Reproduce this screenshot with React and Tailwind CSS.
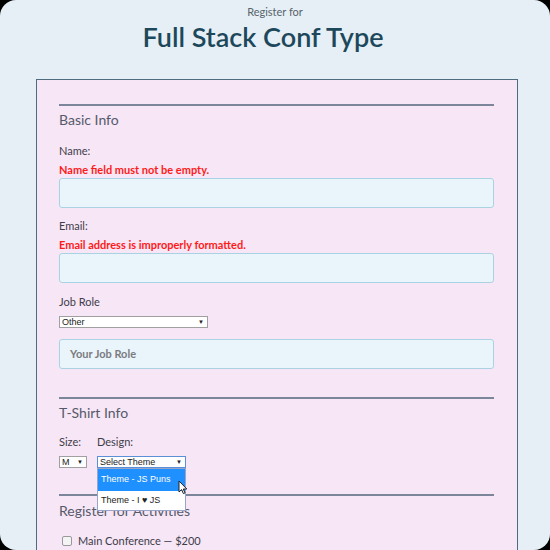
import React from 'react';

const font = { fontFamily: 'Lato, "Open Sans", sans-serif' };

const Rule = ({ className = '' }) => <div className={`h-[2px] bg-[#7c869b] ${className}`} />;

const Label = ({ children, className = '' }) => (
  <div className={`text-[11px] leading-[14px] text-[#3d3d4a] ${className}`}>{children}</div>
);

const Error = ({ children, className = '' }) => (
  <div className={`text-[11px] leading-[14px] font-bold text-[#ff1a1a] ${className}`}>{children}</div>
);

const Input = ({ placeholder, className = '' }) => (
  <div className={`h-[30px] rounded-[3px] border border-[#a9d3e3] bg-[#e9f5fb] flex items-center px-[10px] text-[11px] font-bold text-[#7b7b80] ${className}`}>
    {placeholder}
  </div>
);

const Select = ({ value, width, focused, className = '' }) => (
  <div
    className={`h-[12px] bg-white border flex items-center justify-between pl-[2px] pr-[3px] text-[9px] leading-none text-[#222] ${focused ? 'border-[#5b8fd6]' : 'border-[#a0a0a0]'} ${width} ${className}`}
    style={{ fontFamily: '"Liberation Sans", Arial, sans-serif' }}
  >
    <span>{value}</span>
    <span className="text-[6px]">▼</span>
  </div>
);

export default function App() {
  return (
    <div className="w-[550px] h-[550px] bg-black" style={font}>
      <div className="w-full h-full rounded-[16px] bg-[#e6eff5] overflow-hidden flex flex-col items-center">
        <div className="mt-[5px] text-[11px] leading-[14px] text-[#56646e]">Register for</div>
        <h1 className="mt-[2px] mr-[24px] text-[27px] leading-[32px] font-semibold text-[#1d485b]">Full Stack Conf Type</h1>

        <div className="mt-[26px] w-[482px] self-start ml-[36px] flex-1 bg-[#f7e6f5] border-[1.5px] border-b-0 border-[#4f6b80] pt-[24px] pl-[22px] pr-[23px]">
          <Rule />
          <div className="mt-[5px] text-[14px] leading-[18px] text-[#555a6b]">Basic Info</div>
          <Label className="mt-[15px]">Name:</Label>
          <Error className="mt-[5px]">Name field must not be empty.</Error>
          <Input className="mt-[1px]" />
          <Label className="mt-[11px]">Email:</Label>
          <Error className="mt-[5px]">Email address is improperly formatted.</Error>
          <Input className="mt-[1px]" />
          <Label className="mt-[12px]">Job Role</Label>
          <Select value="Other" width="w-[149px]" className="mt-[7px]" />
          <Input className="mt-[11px]" placeholder="Your Job Role" />

          <Rule className="mt-[28px]" />
          <div className="mt-[5px] text-[14px] leading-[18px] text-[#555a6b]">T-Shirt Info</div>
          <div className="mt-[13px] flex gap-[10px]">
            <div className="flex flex-col">
              <Label>Size:</Label>
              <Select value="M" width="w-[28px]" className="mt-[7px]" />
            </div>
            <div className="relative flex flex-col">
              <Label>Design:</Label>
              <Select value="Select Theme" width="w-[89px]" focused className="mt-[7px]" />
              <div
                className="absolute left-0 top-[33px] w-[89px] bg-white border border-[#9aa4c8] text-[9px] z-10"
                style={{ fontFamily: '"Liberation Sans", Arial, sans-serif' }}
              >
                <div className="h-[22px] bg-[#1e90ff] text-white flex items-center pl-[3px]">Theme - JS Puns</div>
                <div className="h-[19px] text-[#222] flex items-center pl-[3px]">Theme - I ♥ JS</div>
                <svg className="absolute left-[80px] top-[11px]" width="10" height="15" viewBox="0 0 10 15">
                  <path d="M1 1 L1 12 L3.6 9.6 L5.4 13.6 L7 12.9 L5.3 9 L8.8 9 Z" fill="white" stroke="#222" strokeWidth="1" strokeLinejoin="round" />
                </svg>
              </div>
            </div>
          </div>

          <Rule className="mt-[26px]" />
          <div className="mt-[6px] text-[14px] leading-[18px] text-[#555a6b]">Register for Activities</div>
          <div className="mt-[14px] flex items-center gap-[6px] pl-[3px]">
            <div className="w-[10px] h-[10px] rounded-[2px] border border-[#999] bg-[#f4f4f4]" />
            <span className="text-[11px] leading-[14px] text-[#3d3d4a]">Main Conference — $200</span>
          </div>
        </div>
      </div>
    </div>
  );
}
